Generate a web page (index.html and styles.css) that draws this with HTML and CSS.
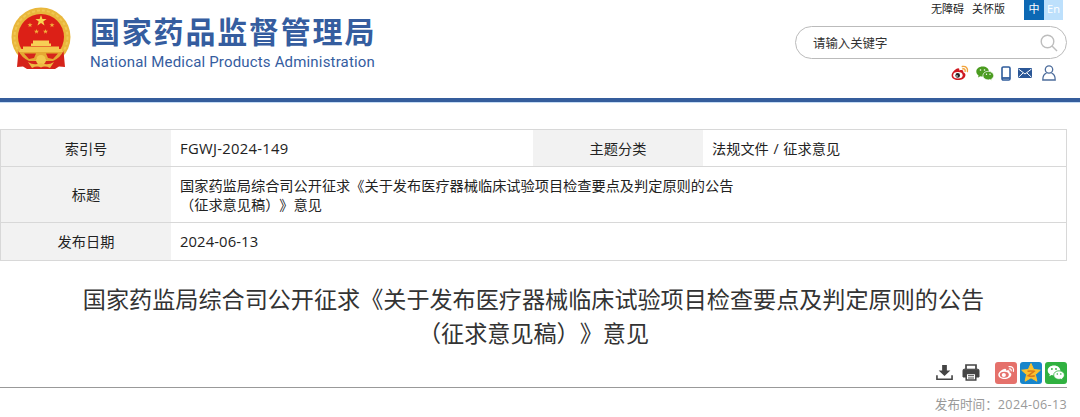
FILE: index.html
```
<!DOCTYPE html>
<html lang="zh-CN">
<head>
  <meta charset="UTF-8">
  <title>国家药品监督管理局</title>
  <link rel="stylesheet" href="styles.css">
</head>
<body>

  <!-- 页头 -->
  <header class="header">
    <div class="logo">
      <svg class="emblem" viewBox="0 0 60 64">
        <circle cx="30" cy="30" r="29.500" fill="#e9b73c"/>
        <circle cx="30" cy="30" r="26.500" fill="none" stroke="#f0c752" stroke-width="2" stroke-dasharray="3 2"/>
        <circle cx="30" cy="30" r="23" fill="#dc2017"/>
        <path d="M30 8 l1.400 3.900 4.200 .1 -3.300 2.500 1.200 4 -3.500 -2.400 -3.500 2.400 1.200 -4 -3.300 -2.500 4.200 -.1z" fill="#f8d451"/>
        <g fill="#f3b23c">
          <path id="star" d="M19 15.500 l.6 1.700 1.900 .1 -1.500 1.100 .5 1.800 -1.500 -1.100 -1.500 1.100 .5 -1.800 -1.500 -1.100 1.900 -.1z"/>
          <use href="#star" x="22"/>
          <use href="#star" x="6.500" y="6.500"/>
          <use href="#star" x="15.500" y="6.500"/>
        </g>
        <path d="M22 33.500h16v3h2v2.500h-20v-2.500h2z" fill="#f7cf55"/>
        <path d="M12 39.500h36v2.500h3v4H9v-4h3z" fill="#f4c64d"/>
        <path d="M8 45h44l-6 8-8 2-4-4H26l-4 4-8-2z" fill="#e5a933"/>
        <path d="M13 46.500H25L23 51L18 52z M47 46.500H35L37 51L42 52z" fill="#d6241b"/>
        <path d="M7.500 44 L6 60 12 59.500 16 62 H44 L48 59.500 54 60 52.500 44 Q49 51 42 54 H18 Q11 51 7.500 44z" fill="#d5231a"/>
        <circle cx="30" cy="53" r="5" fill="#f2c84d"/>
        <path d="M17 55 Q23 59 30 56 Q37 59 43 55 L39 61 Q34 58.500 30 60.500 Q26 58.500 21 61z" fill="#edbb43"/>
      </svg>
      <div class="logo-text">
        <div class="logo-cn">国家药品监督管理局</div>
        <div class="logo-en">National Medical Products Administration</div>
      </div>
    </div>

    <div class="tools">
      <div class="top-links">
        <a>无障碍</a>
        <a>关怀版</a>
        <div class="lang"><span class="on">中</span><span>En</span></div>
      </div>
      <div class="search">
        <span>请输入关键字</span>
        <svg width="18" height="18" viewBox="0 0 18 18" fill="none" stroke="#bdbdbd" stroke-width="1.400">
          <circle cx="7.500" cy="7.500" r="6.300"/>
          <path d="M12 12l5 5"/>
        </svg>
      </div>
      <div class="social">
        <svg class="weibo" viewBox="0 0 18 16">
          <path d="M6.500 3.500C8 3 8.700 4 8.200 5.500 11 4.500 12.800 5 12.200 7.300c1.500.5 2.500 1.500 2.200 3.100C14 13.300 10.500 15 7 15S.6 13.300.6 10.500C.6 7.700 4 4 6.500 3.500z" fill="#cf1820"/>
          <ellipse cx="6.900" cy="10.300" rx="4.700" ry="3.300" fill="#fff"/>
          <circle cx="6.700" cy="10.400" r="2.300" fill="#222"/>
          <circle cx="6" cy="11" r=".8" fill="#fff"/>
          <path d="M11.300 1.500c3.500-.8 5.900 1.800 5.100 5M11.700 3.900c1.700-.4 2.800.8 2.400 2.400" fill="none" stroke="#f2a33a" stroke-width="1.400" stroke-linecap="round"/>
        </svg>
        <svg class="wechat" viewBox="0 0 18 15">
          <path d="M6.600.6C3 .6.300 2.800.3 5.600c0 1.600.9 3 2.300 3.900L2 11.400l2.300-1.200c.8.200 1.500.3 2.300.3 3.600 0 6.300-2.200 6.300-5S10.200.6 6.600.6z" fill="#4b9c20"/>
          <path d="M12.200 5.300c-3.100 0-5.300 1.900-5.300 4.300s2.200 4.300 5.300 4.300c.6 0 1.200-.1 1.800-.3l2 1-.5-1.600c1.300-.8 2.200-2 2.200-3.400 0-2.400-2.400-4.300-5.500-4.300z" fill="#4b9c20" stroke="#fff" stroke-width=".7"/>
          <g fill="#fff"><circle cx="4.500" cy="4" r=".8"/><circle cx="8.500" cy="4" r=".8"/><circle cx="10.500" cy="8.300" r=".7"/><circle cx="14" cy="8.300" r=".7"/></g>
        </svg>
        <svg class="phone" viewBox="0 0 10 15">
          <rect x="1" y="1" width="8" height="13" rx="1.300" fill="#fff" stroke="#2f5c9c" stroke-width="1.600"/>
          <path d="M1 12h8" stroke="#2f5c9c" stroke-width="1.800"/>
        </svg>
        <svg class="mail" viewBox="0 0 14 10">
          <rect width="14" height="10" fill="#2b5797"/>
          <path d="M.5 1 7 6l6.500-5M.5 9.300 5 5M13.500 9.300 9 5" fill="none" stroke="#fff" stroke-width="1"/>
        </svg>
        <svg class="user" viewBox="0 0 14 16" fill="none" stroke="#4d6d9c" stroke-width="1.300">
          <circle cx="7" cy="4.500" r="3.700"/>
          <path d="M4.500 8.200C2 9 .8 11 .8 15h12.400c0-4-1.200-6-3.700-6.800"/>
        </svg>
      </div>
    </div>
  </header>

  <main class="main">
    <!-- 公文信息 -->
    <table class="info">
      <tr>
        <th>索引号</th>
        <td class="index">FGWJ-2024-149</td>
        <th>主题分类</th>
        <td>法规文件 <span class="slash">/</span> 征求意见</td>
      </tr>
      <tr class="tall">
        <th>标题</th>
        <td colspan="3">国家药监局综合司公开征求《关于发布医疗器械临床试验项目检查要点及判定原则的公告<br>（征求意见稿）》意见</td>
      </tr>
      <tr>
        <th>发布日期</th>
        <td colspan="3" class="day">2024-06-13</td>
      </tr>
    </table>

    <h1 class="title">国家药监局综合司公开征求《关于发布医疗器械临床试验项目检查要点及判定原则的公告<br>（征求意见稿）》意见</h1>

    <div class="share">
      <svg class="download" viewBox="0 0 18 17" fill="#444">
        <path d="M6.500.5h5v6h3.700L9 12.300 2.800 6.500h3.700z"/>
        <path d="M1 11.500v4.200h16v-4.200" fill="none" stroke="#444" stroke-width="1.700"/>
      </svg>
      <svg class="print" viewBox="0 0 18 17" fill="none" stroke="#444" stroke-width="1.700">
        <path d="M4 5V1h10v4"/>
        <path d="M1 13V6.500q0-1.300 1.300-1.300h13.400q1.300 0 1.300 1.300V13h-3V9.500H4V13z" fill="#444" stroke-width="1"/>
        <path d="M4.200 9.500h9.600v6.600H4.200z" fill="#fff" stroke-width="1.500"/>
        <path d="M6 11.700h6M6 14h6" stroke-width="1"/>
      </svg>
      <span class="btn red">
        <svg viewBox="0 0 22 22">
          <path d="M9.300 7c1.500-.5 2.200.4 1.800 1.700 2.400-.8 3.900-.2 3.400 1.600 1.300.4 2 1.200 1.800 2.400-.3 2.500-3.300 4.300-6.700 4.300-3.500 0-6.300-1.600-6.300-4.200C3.300 10.300 6.800 7.500 9.300 7z" fill="#fff"/>
          <ellipse cx="9.300" cy="12.800" rx="4.500" ry="3" fill="#e5716b"/>
          <circle cx="8.800" cy="13" r="2.100" fill="#fff"/>
          <path d="M14 4.700c3.200-.6 5.200 1.700 4.400 4.700M14.300 7c1.400-.3 2.200.6 1.900 1.900" fill="none" stroke="#fff" stroke-width="1.200" stroke-linecap="round"/>
        </svg>
      </span>
      <span class="btn blue">
        <svg viewBox="0 0 22 22">
          <path d="M11 1.500l2.700 6 6.600.7-4.900 4.400 1.500 6.600-5.900-3.400-5.900 3.400 1.500-6.600L1.700 8.200l6.600-.7z" fill="#fbc02d" stroke="#fbc02d" stroke-linejoin="round"/>
          <path d="M7.500 9.300q3.500-.8 6.500 0L8.200 13.800q3.500 1 6.600 0" fill="none" stroke="#d9771c" stroke-width="1.500"/>
        </svg>
      </span>
      <span class="btn green">
        <svg viewBox="0 0 22 22" fill="#fff">
          <path d="M9 3.500c-3.700 0-6.300 2.200-6.300 5 0 1.600.9 2.900 2.200 3.800l-.6 1.900 2.300-1.100c.8.200 1.500.3 2.400.3 3.600 0 6.300-2.100 6.300-4.900s-2.700-5-6.300-5z"/>
          <path d="M14 8.800c-3.100 0-5.300 1.900-5.300 4.300s2.200 4.300 5.300 4.300c.6 0 1.200-.1 1.700-.3l2.100 1-.5-1.600c1.300-.8 2.100-2 2.100-3.400 0-2.400-2.300-4.300-5.400-4.300z" stroke="#30b140" stroke-width=".8"/>
          <g fill="#30b140"><circle cx="6.900" cy="7" r=".9"/><circle cx="11" cy="7" r=".9"/><circle cx="12.300" cy="12" r=".8"/><circle cx="15.800" cy="12" r=".8"/></g>
        </svg>
      </span>
    </div>

    <div class="date">发布时间：<span>2024-06-13</span></div>
  </main>

</body>
</html>
```
FILE: styles.css
```
body {
  margin: 0;
  background: #fff;
  color: #222;
  font-family: "Open Sans", "Noto Sans CJK SC", sans-serif;
  text-spacing-trim: space-all;
  overflow: hidden;
}

svg {
  display: block;
}

/* 页头 */
.header {
  display: flex;
  justify-content: space-between;
  box-sizing: border-box;
  height: 103px;
  padding: 0 13px 0 11px;
  border-bottom: 1px solid #c5dcf5;
  box-shadow: inset 0 -4px #355d9c;
}

.logo {
  display: flex;
  gap: 19px;
  padding-top: 7px;
}

.emblem {
  width: 60px;
  height: 64px;
}

.logo-text {
  color: #355d9f;
  white-space: nowrap;
}

.logo-cn {
  margin-top: 4px;
  height: 41px;
  line-height: 39px;
  font-family: "Noto Sans CJK SC", sans-serif;
  font-size: 30px;
  font-weight: 700;
  letter-spacing: 1.8px;
}

.logo-en {
  height: 20px;
  line-height: 21px;
  font-family: Roboto, "Liberation Sans", sans-serif;
  font-size: 15px;
  letter-spacing: 0.17px;
}

.tools {
  width: 272px;
}

.top-links {
  display: flex;
  justify-content: flex-end;
  gap: 8px;
  height: 20px;
  padding-right: 4px;
  line-height: 18px;
  font-size: 11px;
  color: #222;
}

.lang {
  display: flex;
  margin-left: 11px;
  color: #fff;
}

.lang span {
  width: 19px;
  height: 20px;
  text-align: center;
  background: #bde0fc;
}

.lang span.on {
  width: 20px;
  background: #0c68b4;
}

.search {
  display: flex;
  align-items: center;
  justify-content: space-between;
  box-sizing: border-box;
  height: 33px;
  margin-top: 6px;
  padding: 0 8px 0 17px;
  border: 1px solid #bbb;
  border-radius: 17px;
  font-size: 12.4px;
  color: #333;
}

.social {
  display: flex;
  align-items: center;
  justify-content: flex-end;
  height: 16px;
  margin-top: 6px;
  padding-right: 11px;
}

.weibo {
  width: 18px;
  height: 16px;
  margin-right: 7px;
}

.wechat {
  width: 18px;
  height: 15px;
  margin-right: 7px;
}

.phone {
  width: 10px;
  height: 15px;
  margin-right: 7px;
}

.mail {
  width: 14px;
  height: 10px;
  margin-right: 10px;
}

.user {
  width: 14px;
  height: 16px;
}

.main {
  width: 1067px;
}

/* 信息表格 */
.info {
  width: 1067px;
  margin-top: 26px;
  table-layout: fixed;
  border-collapse: collapse;
  font-size: 14.2px;
  line-height: 19px;
}

.info tr {
  height: 37px;
  border: 1px solid #d8d8d8;
}

.info tr.tall {
  height: 56px;
}

.info tr:last-child {
  height: 38px;
}

.info th {
  width: 170px;
  padding: 0;
  background: #f2f2f2;
  font-weight: 400;
}

.info td {
  padding: 0 0 0 9px;
}

.info .index {
  width: 353px;
  font-size: 14.8px;
  letter-spacing: 0.28px;
}

.info .day {
  font-size: 14.8px;
  letter-spacing: 0.1px;
}

.slash {
  margin: 0 1px;
}

.title {
  margin: 21px 0 0;
  font-size: 23.12px;
  font-weight: 400;
  line-height: 34px;
  text-align: center;
  white-space: nowrap;
  color: #333;
}

/* 分享 */
.share {
  display: flex;
  align-items: flex-start;
  justify-content: flex-end;
  box-sizing: border-box;
  height: 28px;
  margin-top: 10px;
  padding-top: 2px;
  border-bottom: 1px solid #999;
}

.download {
  width: 17px;
  height: 17px;
  margin: 2px 9px 0 0;
}

.print {
  width: 18px;
  height: 17px;
  margin: 2px 15px 0 0;
}

.btn {
  width: 22px;
  height: 22px;
  margin-left: 3px;
  border-radius: 3px;
}

.btn.red {
  margin-left: 0;
  background: #e5716b;
}

.btn.blue {
  background: #1785cb;
}

.btn.green {
  background: #30b140;
}

.date {
  margin-top: 7px;
  line-height: 20px;
  font-size: 12.6px;
  text-align: right;
  color: #999;
}

.date span {
  letter-spacing: 0.35px;
}
```
